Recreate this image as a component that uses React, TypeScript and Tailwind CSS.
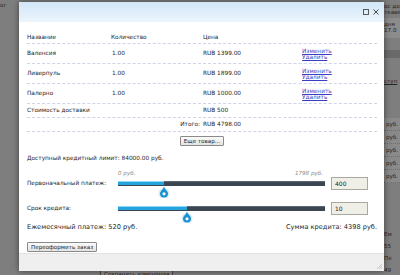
import React from 'react';

interface CartItem {
    name: string;
    qty: string;
    price: string;
}

const items: CartItem[] = [
    { name: 'Валенсия', qty: '1.00', price: 'RUB 1399.00' },
    { name: 'Ливерпуль', qty: '1.00', price: 'RUB 1899.00' },
    { name: 'Палерно', qty: '1.00', price: 'RUB 1000.00' },
];

function Handle() {
    return (
        <svg width="12" height="12" viewBox="0 0 12 12" className="absolute top-full -translate-x-1/2">
            <circle cx="6" cy="7.5" r="5.5" fill="#bfe6f7" opacity="0.7" />
            <path d="M6 0 C6 3 10 5 10 7.5 A4 4 0 0 1 2 7.5 C2 5 6 3 6 0 Z" fill="#1b8fcf" />
            <circle cx="6" cy="7.8" r="1.6" fill="#ffffff" />
        </svg>
    );
}

function Slider({ label, value, pct, min, max }: { label: string; value: string; pct: number; min?: string; max?: string }) {
    return (
        <div>
            {min !== undefined && (
                <div className="ml-[91px] w-[207px] h-[8px] flex justify-between items-center italic text-[#8a8a8a] text-[5.6px]">
                    <span>{min}</span>
                    <span className="pr-[2px]">{max}</span>
                </div>
            )}
            <div className="flex items-center h-[13px]">
                <div className="w-[91px]">{label}</div>
                <div className="relative w-[207px] h-[5px] bg-[#3b4652] border-t border-[#5a6774]">
                    <div className="h-full bg-[#25a3dc] border-t border-[#8fd8f5] -mt-px" style={{ width: `${pct}%` }} />
                    <div className="absolute top-0 h-full" style={{ left: `${pct}%` }}>
                        <Handle />
                    </div>
                </div>
                <div className="ml-[6px] w-[37px] h-[13px] border border-[#a9a9a0] bg-[#efefe7] text-[6px] pl-[3px] flex items-center">
                    {value}
                </div>
            </div>
        </div>
    );
}

export default function App() {
    return (
        <div className="relative w-[400px] h-[275px] overflow-hidden bg-[#7e7e7e] font-['DejaVu_Sans',Verdana,sans-serif] text-[#1e1e1e]">
            {/* Page behind the overlay */}
            <div className="flex flex-col h-full">
                <div className="flex justify-between flex-1">
                    <div className="pt-[2px] text-[5.6px] text-[#2a2a2a] leading-[7px]">ог</div>
                    <div className="w-[16px] overflow-hidden whitespace-nowrap text-[5.6px] leading-[6px] text-[#262626]">
                        <div className="pt-[3px] h-[18px]">
                            <div>ос до</div>
                            <div>ткаве</div>
                        </div>
                        <div className="h-[20px] bg-[#8c8c8c] pt-[3px]">
                            <div>дня</div>
                            <div>17.0</div>
                        </div>
                        <div className="h-[12px]" />
                        <div className="h-[8px] bg-[#6a6a6a]" />
                        <div className="h-[20px]" />
                        <div className="underline h-[40px]">ступ</div>
                        {[0, 1, 2, 3, 4].map((i) => (
                            <div key={i} className="h-[13px] flex items-center bg-[#8a8a8a] border-b border-dotted border-[#6f6f6f] pl-[2px]">руб.</div>
                        ))}
                        <div className="h-[48px]" />
                        <div className="h-[12px]">Ем</div>
                        <div className="h-[12px]">55</div>
                        <div className="h-[12px]">Пе</div>
                        <div className="h-[12px]">49</div>
                    </div>
                </div>
            </div>
            <div className="absolute left-[100px] top-[270px] border border-[#444] bg-[#8a8a8a] px-[3px] text-[5.6px] leading-[7px] text-[#222]">Сохранить изменения</div>

            {/* Modal */}
            <div className="absolute left-[19px] top-[2px] w-[365px] h-[269px] bg-white flex flex-col shadow-[0_0_6px_rgba(0,0,0,0.5)]">
                <div className="h-[20px] bg-gradient-to-b from-[#d2e6f8] to-[#ecf5fc] flex items-center justify-end gap-[4px] pr-[5px]">
                    <svg width="6" height="6" viewBox="0 0 6 6">
                        <rect x="0.5" y="0.5" width="5" height="5" fill="none" stroke="#4a4a4a" strokeWidth="0.9" />
                    </svg>
                    <svg width="6" height="6" viewBox="0 0 6 6">
                        <path d="M0.5 0.5 L5.5 5.5 M5.5 0.5 L0.5 5.5" stroke="#4a4a4a" strokeWidth="1" />
                    </svg>
                </div>

                <div className="flex-1 pl-[8px] pr-[7px] pt-[10px] text-[5.8px]">
                    {/* Cart table */}
                    <div className="grid grid-cols-[84px_92px_99px_1fr] items-center h-[12px] border-b border-dashed border-[#cdd5e6]">
                        <div>Название</div>
                        <div>Количество</div>
                        <div>Цена</div>
                        <div />
                    </div>
                    {items.map((it) => (
                        <div key={it.name} className="grid grid-cols-[84px_92px_99px_1fr] items-center h-[20px] border-b border-dashed border-[#cdd5e6]">
                            <div>{it.name}</div>
                            <div className="pl-[1px]">{it.qty}</div>
                            <div>{it.price}</div>
                            <div className="flex flex-col leading-[6px] text-[#3a3fc4] underline">
                                <span>Изменить</span>
                                <span>Удалить</span>
                            </div>
                        </div>
                    ))}
                    <div className="grid grid-cols-[84px_92px_99px_1fr] items-center h-[14px] border-b border-dashed border-[#cdd5e6]">
                        <div className="col-span-2">Стоимость доставки</div>
                        <div>RUB 500</div>
                        <div />
                    </div>
                    <div className="grid grid-cols-[84px_92px_99px_1fr] items-center h-[14px] border-b border-dashed border-[#cdd5e6]">
                        <div className="col-span-2 text-right pr-[3px]">Итого:</div>
                        <div>RUB 4798.00</div>
                        <div />
                    </div>
                    <div className="flex justify-center mt-[4px]">
                        <button className="h-[10px] px-[3px] border border-[#8a8a8a] rounded-[1px] bg-gradient-to-b from-[#fbfbfb] to-[#e3e3e3] text-[5.6px] leading-[8px] text-[#1e1e1e]">
                            Еще товар...
                        </button>
                    </div>

                    <div className="mt-[8px] h-[8px] flex items-center">Доступный кредитный лимит: 84000.00 руб.</div>

                    <div className="mt-[7px]">
                        <Slider label="Первоначальный платеж:" value="400" pct={22} min="0 руб." max="1798 руб." />
                    </div>
                    <div className="mt-[12px]">
                        <Slider label="Срок кредита:" value="10" pct={33.5} />
                    </div>

                    <div className="mt-[8px] h-[9px] flex items-center justify-between text-[6.6px]">
                        <span>Ежемесячный платеж: 520 руб.</span>
                        <span>Сумма кредита: 4398 руб.</span>
                    </div>

                    <button className="mt-[10px] h-[10px] px-[3px] border border-[#8a8a8a] rounded-[1px] bg-gradient-to-b from-[#fbfbfb] to-[#e3e3e3] text-[5.6px] leading-[8px] text-[#1e1e1e]">
                        Переоформить заказ
                    </button>
                </div>

                <div className="h-[18px] bg-[#efefef] border-t border-[#e2e2e2] flex justify-end items-end p-[2px]">
                    <svg width="6" height="6" viewBox="0 0 6 6">
                        <path d="M6 1 L1 6 M6 3 L3 6 M6 5 L5 6" stroke="#b5b5b5" strokeWidth="0.7" />
                    </svg>
                </div>
            </div>
        </div>
    );
}
